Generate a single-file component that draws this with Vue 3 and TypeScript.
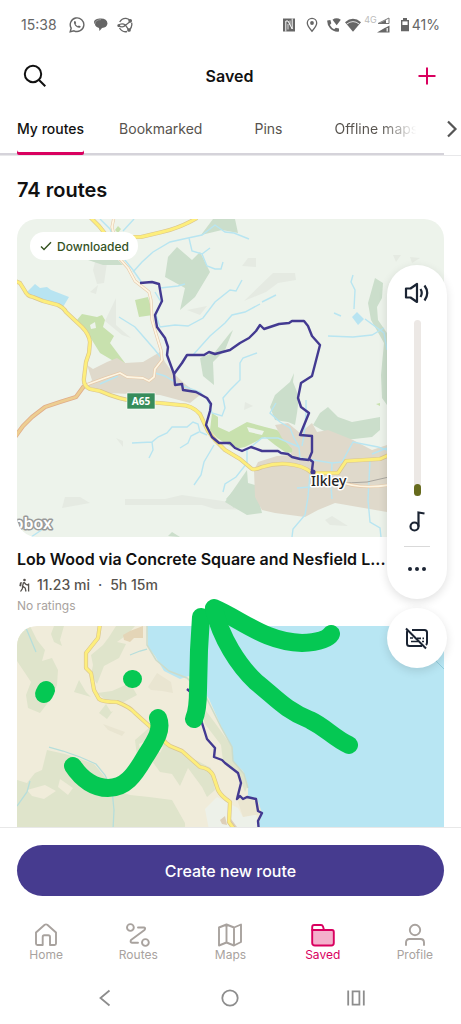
<script setup lang="ts">
import { ref } from 'vue'

type TabId = 'home' | 'routes' | 'maps' | 'saved' | 'profile'

const listTabs: string[] = ['My routes', 'Bookmarked', 'Pins', 'Offline maps']
const activeTab = ref<string>('My routes')
const volume = ref<number>(0)

const navItems: { id: TabId; label: string }[] = [
  { id: 'home', label: 'Home' },
  { id: 'routes', label: 'Routes' },
  { id: 'maps', label: 'Maps' },
  { id: 'saved', label: 'Saved' },
  { id: 'profile', label: 'Profile' },
]
const activeNav = ref<TabId>('saved')

// Main roads are drawn twice: a darker casing below, a bright line above.
const ilkleyRoads: string[] = [
  'M15 281L20 283L25 291Q27 296 33 297L43 301L58 305Q64 308 66 312L82 327Q89 334 90 342L89 353L86 362L84 378Q83 386 90 389L100 391Q120 400 140 402L160 403L180 405Q192 405 200 414Q205 425 208 431L215 440L225 450L240 459L252 469Q256 470 262 467Q275 463 287 464Q303 465 312 473L338 473L346 461L380 459L389 455',
  'M90 217L99 226L107 236M128 237L141 237L162 232Q180 228 197 218',
]
const coastRoads: string[] = [
  'M100 624L98 638L86 653L86 668L91 673L94 690L99 699Q103 702 117 702Q130 707 135 713L145 722L154 730L166 743L170 746L182 751L200 767Q209 768 213 775L218 790Q221 796 230 802L229 822L234 829',
]
const streams: string[] = [
  'M133 272L142 262L153 252L170 242L188 238L202 235L215 225L225 232L234 233L249 239',
  'M189 238L192 251L202 254L210 248M202 254L207 266L215 269L221 269L223 262',
  'M100 219L110 229L120 254L133 270L142 283M134 219L123 231',
  'M155 292L161 302L156 315L160 327L175 325L188 326L203 318L215 302L230 290L236 291L242 280',
  'M193 355L210 336L225 323L232 315L245 312L260 304M262 302L276 295',
  'M160 288L178 286L185 284M119 317L135 327L142 335L155 350L162 359',
  'M100 384L118 376M155 373L165 376L180 385L200 392L208 400L212 413L222 416L225 408L223 398L230 390L240 380L240 363L243 358L257 353',
  'M132 443L152 442L158 437L167 433L172 427L187 427L193 422L198 424L200 432L207 435M152 442L153 450L149 458M180 448L188 443L191 436L199 432',
  'M214 445L204 462L201 475L194 485M223 492L225 484L236 477L247 463L247 450L262 438L278 438L299 447',
  'M276 403L270 413L280 422L290 428L294 438L299 447L300 458L332 463L342 462L353 442L378 447L387 450',
  'M306 400V412L304 436L302 446M332 463L331 487L332 499M297 488L311 487',
  'M310 474L308 497L305 515L293 529L292 537M370 460L368 500L370 522L380 528L381 537M372 454L387 448',
  'M353 275L351 282L355 290L354 309M328 336L353 337L372 335L384 328M334 313L341 316M365 319L384 333L387 350M31 537L43 529',
]
const walkLoop: string[] = [
  'M140 283L152 282L159 284L162 301L155 315L157 327L165 338L168 347L167 355L174 374L182 363L187 355L204 355L209 352L215 354L230 350L240 343L249 338L256 331L260 325L264 329L279 324L289 323L292 321L304 321L308 326L312 336L320 345L312 376L301 383L298 398L301 407L309 413L300 435L312 436L312 452L309 459L313 462L312 470L313 473',
  'M174 374L175 385L182 384L183 390L196 392L207 398L211 404L210 411L206 425L212 437L219 443L230 443L235 448L242 451L251 447L262 451L278 451L281 453L288 454L292 457L300 459L309 460',
]
</script>

<template>
  <div class="app">
    <header class="status">
      <div class="status-side">
        <span class="clock">15:38</span>
        <svg class="s-icon first" viewBox="0 0 16 16" width="16" height="16" fill="none" stroke="#666" stroke-width="1.4">
          <path d="M1.2 14.8L2.2 11.2A6.8 6.8 0 1 1 5 13.8Z" />
          <path d="M5.2 4.2Q4 6.2 6.2 8.7Q8.6 11.3 10.8 10.7Q12 10 11.6 9.2L9.8 8.4L8.9 9.3Q7.2 8.7 6.5 7.1L7.2 6.2L6.5 4.3Q5.8 3.7 5.2 4.2Z" fill="#666" stroke="none" />
        </svg>
        <svg class="s-icon" viewBox="0 0 16 16" width="16" height="16">
          <path d="M2 3Q4 1 8 1.5Q14 1.5 14.5 6.5Q14 10.5 9 11L6.5 14L6 11Q2.2 10 2 7.3Q0 5 2 3Z" fill="#666" />
          <path d="M2 7Q2 2.8 8 2.6" fill="none" stroke="#aaa" stroke-width=".7" />
        </svg>
        <svg class="s-icon" viewBox="0 0 16 16" width="16" height="16" fill="none" stroke="#666" stroke-width="1.3">
          <path d="M2.7 5Q5 1 9 1.3Q11.5 1.7 12.5 3M14.6 5.7Q15.7 10 12 13.4M10 14.5Q5.5 15.7 2.5 11" />
          <path d="M1 8.5Q5 5.5 8.5 8.2L13.2 4.6M1 8.5Q6 11.5 8.5 8.2L12 13.3" /><circle cx="13.2" cy="3.8" r="1.2" fill="#666" /><circle cx="12" cy="13" r="1.2" fill="#666" /><circle cx="1.8" cy="8.6" r=".8" fill="#666" />
        </svg>
      </div>
      <div class="status-side right">
        <svg viewBox="0 0 14 14" width="14" height="14"><path d="M1 .5H13V13.5H1Z" fill="#666" /><path d="M3.8 13.5V3L6 3L10.2 11V.5" stroke="#fff" stroke-width="1" fill="none" /><path d="M6 11.5V6M8 2.5V7" stroke="#fff" stroke-width=".8" /></svg>
        <svg class="pin" viewBox="0 0 12 16" width="12" height="16"><path d="M6 14.2Q1.3 8.8 1.3 6A4.7 4.7 0 0 1 10.7 6Q10.7 8.8 6 14.2Z" fill="none" stroke="#666" stroke-width="1.3" /><circle cx="6" cy="6" r="1.9" fill="#666" /></svg>
        <svg viewBox="0 0 16 16" width="16" height="16"><path d="M1.2 3.5L4.4 3L5.3 6.3L3.9 8Q5.5 11 8.2 12.3L9.8 10.7L13 11.6V14.6Q8 15.5 4 11.3Q1 7.8 1.2 3.5ZM6.5 2.7Q10.5-.2 14.8 2.7L10.7 8.3Z" fill="#666" /></svg>
        <svg viewBox="0 0 18 16" width="18" height="16"><path d="M1 5.2Q9-1.7 17 5.2L9 14.7Z" fill="#666" /><path d="M2.8 7Q9 2.2 15.2 7" stroke="#fff" stroke-width=".8" fill="none" /></svg>
        <span class="fourg">4G</span>
        <svg viewBox="0 0 13 16" width="13" height="16"><path d="M12 1V6.5H1Z" fill="none" stroke="#777" /><path d="M9 3V6.5H2ZM8.5 10.5V15.5H0ZM12.5 8.5V15.5H0Z" fill="#666" /><path d="M10.2 11V14.5" stroke="#fff" stroke-width="1.2" /></svg>
        <svg class="battery" viewBox="0 0 10 14" width="10" height="14"><path d="M3 0H7V2H9V13.3H1V2H3Z" fill="#666" /><path d="M2.4 3.4H7.6V7H2.4Z" fill="#fff" /></svg>
        <span class="clock">41%</span>
      </div>
    </header>

    <div class="titlebar">
      <button class="icon-btn" aria-label="Search">
        <svg viewBox="0 0 24 24" width="24" height="24" fill="none" stroke="#111" stroke-width="2"><circle cx="10" cy="10" r="8.2" /><path d="M16 16L22.3 22.3" /></svg>
      </button>
      <h1>Saved</h1>
      <button class="icon-btn end" aria-label="Add">
        <svg viewBox="0 0 18 18" width="18" height="18" stroke="#d9005f" stroke-width="2"><path d="M9 .5V17.5M.5 9H17.5" /></svg>
      </button>
    </div>

    <nav class="tabs" aria-label="Saved lists">
      <div class="tab-row">
        <button v-for="t in listTabs" :key="t" class="tab" :class="{ active: t === activeTab }" @click="activeTab = t">{{ t }}</button>
      </div>
      <button class="more" aria-label="More tabs">
        <svg viewBox="0 0 12 18" width="12" height="18" fill="none" stroke="#555" stroke-width="2.2"><path d="M2 1.5L9.5 9L2 16.5" /></svg>
      </button>
    </nav>

    <main class="list">
      <h2>74 routes</h2>
      <article class="card">
        <div class="map">
          <svg class="map-art" viewBox="17 219 427 318" preserveAspectRatio="xMidYMid slice">
            <path d="M17 219H444V537H17Z" fill="#edf3eb" />
            <g fill="#e5eae2">
              <path d="M95 262L107 263L104 283L97 284L93 270ZM90 292L98 285L96 294ZM116 298V325L131 338L122 335L105 321ZM187 310L207 306L200 315ZM244 301L273 273L295 273L296 280L278 283L266 292ZM242 266L248 258H256V267ZM393 255H401L396 262ZM410 257L420 258L412 263ZM125 499L165 499L182 495L243 504L253 510L215 509L202 505L125 505ZM116 438L123 447L123 441ZM325 520L332 516L348 526L330 525Z" />
              <path d="M65 497H80L90 503L62 508ZM245 402L253 406L244 410Z" />
            </g>
            <g fill="#cbdecb">
              <path d="M168 257L177 247L192 260L200 252L210 272L195 297L180 310L185 288L165 277ZM213 219H235L238 233L222 230L201 235Z" />
              <path d="M200 358L215 352L230 333L233 330L225 350L213 362L214 385L203 376Z" />
              <path d="M88 260L117 259L123 265L103 265ZM270 407L275 395L290 382L294 373L293 382L299 397L297 413L295 425L288 422L275 420Z" />
              <path d="M313 425L320 413L328 407L338 417L352 422L380 417L380 430L372 437L345 440L322 430ZM225 502L247 470L248 483L255 485L262 513L247 515L235 508Z" />
              <path d="M368 303L375 278L383 283L382 298L377 307L378 320L387 333V405L382 398L381 375L384 343L371 320ZM168 536L172 532L180 537ZM226 499L234 490V508Z" />
            </g>
            <g fill="#c8e1ae">
              <path d="M77 320L82 314L97 317L102 315L105 320L103 327L114 336L110 343L125 363H117L100 353L90 337L78 325Z" />
              <path d="M135 300L148 297L153 315L139 317ZM115 230L118 226L121 229L118 233Z" />
              <path d="M212 413L218 417V427L229 432L247 422L265 427L277 430L292 442L293 453L285 452L275 445L265 437L245 447L235 449L225 443L217 438L210 430ZM353 445L363 446L360 451L354 449ZM376 404L380 403V406Z" />
            </g>
            <path d="M90 325L95 322L96 328L91 329ZM247 427L264 431L262 435L249 432Z" fill="#edf3eb" />
            <g fill="#dfd9cb">
              <path d="M87 365L93 369L107 362L117 358L125 363L143 362L160 352L165 362L172 372L185 384L200 395L190 403L160 395L130 394L108 393L88 386L92 380Z" />
              <path d="M254 470L258 462L277 456L290 455L293 450L282 438L275 425L288 423L300 433L312 423L317 432L328 430L353 440L372 450L387 445V512L358 507L335 503L318 510L305 517L275 513L262 510L255 497Z" />
            </g>
            <path d="M27 292L35 284L40 288L47 287L51 290L69 297L63 307L33 299ZM352 317L357 312L364 319L358 325Z" fill="#b8e4f1" />
            <g fill="none" stroke="#b8e5f1" stroke-width="1.4"><path v-for="s in streams" :key="s" :d="s" /></g>
            <path d="M335 483Q352 483 367 482L389 477" fill="none" stroke="#aaa7a0" stroke-width="1" />
            <g fill="none" stroke-linejoin="round">
              <path class="minor-case" d="M114 217L112 227L114 235L120 259L128 268L135 281L149 292L151 300L152 320L157 337L161 350L162 360L155 369L154 377L149 381L143 378L127 377L120 373L105 378L86 385M335 480Q358 490 389 485" />
              <path class="minor" d="M114 217L112 227L114 235L120 259L128 268L135 281L149 292L151 300L152 320L157 337L161 350L162 360L155 369L154 377L149 381L143 378L127 377L120 373L105 378L86 385M335 480Q358 490 389 485" />
              <path d="M84 386L76 397L60 402L45 407L32 417L23 426L15 437" stroke="#e0ad8a" stroke-width="4.4" />
              <path d="M84 386L76 397L60 402L45 407L32 417L23 426L15 437" stroke="#edce91" stroke-width="2.8" />
              <path v-for="r in ilkleyRoads" :key="'c' + r" class="road-case" :d="r" />
              <path v-for="r in ilkleyRoads" :key="r" class="road" :d="r" />
              <path v-for="w in walkLoop" :key="w" class="walk" :d="w" />
            </g>
            <circle cx="313" cy="472" r="2.6" fill="#433a91" />
            <path d="M127 393H155V409H127Z" fill="#378c5b" stroke="#fff" stroke-width=".6" />
            <text class="road-sign" x="141" y="405" text-anchor="middle">A65</text>
            <text class="place" x="311" y="486">Ilkley</text>
            <text class="credit" x="52" y="529" text-anchor="end">pbox</text>
          </svg>
          <span class="badge">
            <svg viewBox="0 0 12 10" width="12" height="10" fill="none" stroke="#34521f" stroke-width="1.4"><path d="M1 5.5L4 8.5L11 1.2" /></svg>
            Downloaded
          </span>
        </div>
        <h3>Lob Wood via Concrete Square and Nesfield L...</h3>
        <p class="meta">
          <svg viewBox="0 0 14 14" width="14" height="14" fill="none" stroke="#55514d" stroke-width="1.3">
            <circle cx="7.5" cy="2" r="1.3" fill="#55514d" stroke="none" />
            <path d="M6.6 4.2L5.6 8L8.2 10L9 13.5M5.8 8.5L5.2 11L3.5 13.5M7 4.3L9 6.5L11 7M11.6 5.5V13.5" />
            <path d="M4.8 4L3 4.5L2.3 8L4.2 8.4Z" fill="#55514d" stroke="none" />
          </svg>
          <span>11.23 mi</span><span class="dot">·</span><span>5h 15m</span>
        </p>
        <p class="rating">No ratings</p>
      </article>

      <article class="card">
        <div class="map">
          <svg class="map-art" viewBox="17 626 427 318" preserveAspectRatio="xMidYMid slice">
            <path d="M17 626H444V944H17Z" fill="#f0ecda" />
            <g fill="#dfe4cb">
              <path d="M17 626H30L37 640L45 650L42 661L52 658L58 670L57 685L50 700L40 713L28 708L26 695L31 682L25 673L17 661Z" />
              <path d="M54 626H64L60 640L62 646L54 642L51 634ZM116 626H135L128 634L117 642L126 644L119 658L104 666L97 684L91 675L93 665L91 655L103 645L109 637ZM97 693L112 691L130 683L137 695L122 703L107 701ZM79 680L86 692L91 697L74 692ZM106 704L111 712L113 711L107 719L99 713Z" />
              <path d="M17 780L27 783L35 773L42 770L47 750L65 754L80 759L94 764L104 776L115 790L130 795L149 797L172 800L185 823L187 944H17Z" />
              <path d="M135 740L150 727L163 742L175 749L190 757L211 768L215 790L207 797L202 787L188 768L180 786L172 774L160 772L149 757L137 756Z" />
              <path d="M198 700L218 727L233 748L233 760L242 770L248 785L245 792L238 773L223 761L221 745L205 724Z" />
            </g>
            <g fill="#f0ecda"><path d="M139 744L148 740L150 747L140 749ZM153 742L163 747L160 753ZM27 790L45 785L56 791L44 799L32 796ZM60 779L73 788L68 795L58 787Z" /></g>
            <g fill="#e9e5d1"><path d="M148 687L157 673L171 682L173 693L162 691L151 690ZM103 724L125 732L122 736L108 730Z" /></g>
            <path d="M123 635L130 631L143 626V638L134 638L130 642L124 640Z" fill="#e4d5b7" />
            <path d="M205 809L217 797L230 804L238 808L243 817L256 813L258 830H209Z" fill="#edf1e9" />
            <path d="M236 796L249 799L260 801L261 814L243 817Z" fill="#ebe6d1" />
            <path d="M220 820L225 816L227 825L222 824ZM231 819L237 827H230Z" fill="#ddcfb8" />
            <g fill="none" stroke="#b6dedb" stroke-width="1.3"><path d="M26 628L31 640L36 652M49 747L63 751L80 757L96 764L105 775L112 790L114 810L113 830M17 806L27 792L30 781M130 655L140 651L147 649" /></g>
            <path d="M147 626H444V944H258V827L262 813L257 798L248 797L248 785L243 771L233 761L233 749L224 733L209 699L198 683L189 676L180 679L164 671L155 656L148 647Z" fill="#b8e6f3" />
            <path d="M147 626V645L156 660L169 671L187 678L206 697L221 727L232 747L233 761L244 774L248 788" fill="none" stroke="#ccdccb" stroke-width="1.5" />
            <path d="M436 661L446 671" stroke="#91cddd" stroke-width="1" />
            <g fill="none" stroke-linejoin="round">
              <path v-for="r in coastRoads" :key="'c' + r" class="road-case" :d="r" />
              <path v-for="r in coastRoads" :key="r" class="road" :d="r" />
              <path class="walk" d="M187 689L193 694L200 709L202 723L207 739L215 748L214 757L222 760L225 763L238 773L241 783L237 799L240 796L243 799L247 797L256 799L258 811L262 813L258 821L259 832" />
            </g>
          </svg>
        </div>
      </article>
    </main>

    <footer class="footer">
      <button class="create">Create new route</button>
      <nav class="bottom-nav" aria-label="Main">
        <a v-for="n in navItems" :key="n.id" href="#" :class="{ active: n.id === activeNav }" @click.prevent="activeNav = n.id">
          <svg viewBox="0 0 24 24" width="24" height="24" fill="none" stroke="currentColor" stroke-width="1.9" stroke-linejoin="round" stroke-linecap="round">
            <template v-if="n.id === 'home'"><path d="M2 9.5L10.7 1.8Q12 1 13.3 1.8L22 9.5V20.5Q22 22 20.5 22H16V14Q16 12.3 14.3 12.3H10.2Q8.7 12.3 8.7 14V22H3.5Q2 22 2 20.5Z" /></template>
            <template v-else-if="n.id === 'routes'"><circle cx="4.4" cy="4.5" r="3.4" /><circle cx="19.4" cy="19.5" r="3.4" /><path d="M12 4.5H18Q20 5 18.5 7L5 17Q3.8 19.5 6 19.7H12" /></template>
            <template v-else-if="n.id === 'maps'"><path d="M1 4.5L8.5 1.5L16 4.5L23 1.5V19L16 22.5L8.5 19.5L1 22.5ZM8.5 1.5V19.5M16 4.5V22.5" /></template>
            <template v-else-if="n.id === 'saved'"><path d="M1.2 7H21Q22.8 7 22.8 9V20Q22.8 22.5 20.3 22.5H4Q1.2 22.5 1.2 20Z" fill="#f4b0cc" /><path d="M1.2 7V4Q1.2 2 3.2 2H10Q11.5 2 12 3.5L13 7" /></template>
            <template v-else><circle cx="12" cy="7" r="5.2" /><path d="M3 22V19.5Q3 16 6.5 16H17.5Q21 16 21 19.5V22" /></template>
          </svg>
          <span>{{ n.label }}</span>
        </a>
      </nav>
      <div class="system-nav">
        <button aria-label="Back"><svg viewBox="0 0 18 18" width="18" height="18" fill="none" stroke="#8d8d8d" stroke-width="1.8"><path d="M13.5 1.5L4.5 9L13.5 16.5" /></svg></button>
        <button aria-label="Home screen"><svg viewBox="0 0 18 18" width="18" height="18" fill="none" stroke="#8d8d8d" stroke-width="1.8"><circle cx="9" cy="9" r="7.7" /></svg></button>
        <button aria-label="Recent apps"><svg viewBox="0 0 18 18" width="18" height="18" fill="none" stroke="#8d8d8d" stroke-width="1.8"><path d="M1.2 1.5V16.5M16.8 1.5V16.5M5.6 2.4H12.4V15.6H5.6Z" /></svg></button>
      </div>
    </footer>

    <svg class="ink" viewBox="0 0 461 1024" aria-hidden="true">
      <g fill="none" stroke="#05c853" stroke-width="18" stroke-linecap="round" stroke-linejoin="round">
        <path d="M44 694L46 690M132 679H133" />
        <path d="M73 766C82 780 95 788 108 788C125 788 134 776 145 757C155 741 163 730 158 718" />
        <path d="M201 617L199 650L198 690Q198 710 194 719" />
        <path d="M214 608C242 620 265 642 302 643Q326 642 331 634" />
        <path d="M214 609C221 638 238 665 256 682C275 697 285 710 310 720C325 727 335 739 349 745" />
      </g>
    </svg>

    <aside class="volume-stack">
      <div class="volume">
        <button aria-label="Sound">
          <svg viewBox="0 0 26 22" width="26" height="22" fill="none" stroke="#1b2433" stroke-width="2.2" stroke-linejoin="round"><path d="M2 6.5H6.5L13 2V20L6.5 15.5H2Z" /><path d="M16.5 7Q19 11 16.5 15M20.5 3.5Q26 11 20.5 18.5" /></svg>
        </button>
        <input v-model.number="volume" type="range" min="0" max="100" aria-label="Media volume" />
        <button aria-label="Media">
          <svg viewBox="0 0 18 22" width="18" height="22" fill="none" stroke="#1b2433" stroke-width="2.2"><circle cx="6.5" cy="16.5" r="4" /><path d="M10.5 16.5V2.5L16.5 3.5" /></svg>
        </button>
        <hr />
        <button aria-label="More volume options">
          <svg viewBox="0 0 20 6" width="20" height="6" fill="#1b2433"><circle cx="3" cy="3" r="2" /><circle cx="10" cy="3" r="2" /><circle cx="17" cy="3" r="2" /></svg>
        </button>
      </div>
      <button class="caption" aria-label="Live captions off">
        <svg viewBox="0 0 24 24" width="24" height="24" fill="none" stroke="#1b2433" stroke-width="2"><path d="M7 4H19.5Q22 4 22 6.5V16.5Q22 18 21 19M17 20H4.5Q2 20 2 17.5V6Q2 5 2.8 4.3M1 2.5L21 22.5" /><path d="M5 12H8M12 12.3H16M17.5 12.3H19M6 15.5H13M17 15.5H19" stroke-width="1.7" /></svg>
      </button>
    </aside>
  </div>
</template>

<style>
body { margin: 0; background: #fff; }
</style>

<style scoped>
.app { position: relative; display: flex; flex-direction: column; height: 100vh; overflow: hidden; background: #fff; color: #111; font-family: Inter, "Liberation Sans", sans-serif; }
button { border: 0; padding: 0; background: none; font: inherit; color: inherit; cursor: pointer; }
svg { display: block; flex: none; }
h1, h2, h3, p { margin: 0; }
.status { display: flex; justify-content: space-between; align-items: center; height: 50px; padding: 0 21px; flex: none; color: #666; }
.status-side { display: flex; align-items: center; gap: 8px; }
.status-side.right { gap: 2px; }
.clock { font-size: 14px; line-height: 20px; }
.s-icon.first { margin-left: 4px; }
.pin { margin: 0 6px 0 8px; }
.fourg { align-self: flex-start; margin-right: -2px; font-size: 9px; line-height: 10px; color: #bbb; }
.battery { margin-left: 8px; }
.titlebar { display: grid; grid-template-columns: 1fr auto 1fr; align-items: center; height: 52px; padding: 0 25px 0 23px; flex: none; }
.icon-btn { justify-self: start; }
.icon-btn.end { justify-self: end; }
h1 { font-size: 16px; line-height: 24px; font-weight: 600; }
.tabs { display: flex; justify-content: space-between; height: 53px; flex: none; border-bottom: 1px solid #e8e8ea; }
.tab-row { display: flex; gap: 35px; flex: 1; min-width: 0; overflow: hidden; padding-left: 17px; box-shadow: inset 0 -2px #d5d3da; }
.tab { flex: none; min-width: 62px; font-size: 14px; color: #57534e; white-space: nowrap; }
.tab.active { color: #111; font-weight: 500; box-shadow: inset 0 -3px #d9005f; border-radius: 2px; }
.tab:last-child { background: linear-gradient(90deg, #57534e 56%, transparent 98%); background-clip: text; color: transparent; }
.more { display: flex; align-items: center; justify-content: flex-end; width: 17px; padding-right: 3px; flex: none; }
.list { flex: 1; min-height: 0; overflow: hidden; padding: 0 17px; }
h2 { font-size: 20px; line-height: 28px; font-weight: 600; padding: 20px 0 15px; }
.card { margin-bottom: 12px; }
.map { position: relative; aspect-ratio: 427 / 318; border-radius: 20px; overflow: hidden; }
.map-art { width: 100%; height: 100%; }
.road-case { stroke: #dac58e; stroke-width: 4.2; }
.road { stroke: #fdee7c; stroke-width: 2.9; }
.minor-case { stroke: #e6c9aa; stroke-width: 3; }
.minor { stroke: #fdf5e2; stroke-width: 1.8; }
.walk { stroke: #433a91; stroke-width: 2.4; }
.road-sign { font: 700 10px "Noto Sans", sans-serif; fill: #fff; }
.place { font: 500 14px "Noto Sans", sans-serif; fill: #222; stroke: #fff; stroke-width: 3px; paint-order: stroke; stroke-linejoin: round; }
.credit { font: 600 16px "Noto Sans", sans-serif; fill: #fff; stroke: #999a99; stroke-width: 3px; paint-order: stroke; stroke-linejoin: round; }
.badge { position: absolute; top: 13px; left: 13px; display: flex; align-items: center; gap: 5px; height: 28px; padding: 0 9px 0 10px; border-radius: 14px; background: #fff; color: #34521f; font-size: 12px; font-weight: 500; }
h3 { font-size: 16px; line-height: 24px; font-weight: 600; margin-top: 10px; white-space: nowrap; }
.meta { display: flex; align-items: center; gap: 6px; margin-top: 2px; font-size: 14px; font-weight: 500; line-height: 24px; color: #57534e; }
.dot { padding: 0 2px; }
.rating { font-size: 12px; line-height: 17px; color: #a8a29e; }
.footer { flex: none; background: #fff; border-top: 1px solid #e8e8e8; }
.create { display: block; width: calc(100% - 34px); height: 51px; margin: 17px 17px 0; border-radius: 26px; background: #463b8f; color: #fff; font-size: 16px; font-weight: 500; }
.bottom-nav { display: grid; grid-template-columns: repeat(5, 1fr); margin-top: 27px; }
.bottom-nav a { display: flex; flex-direction: column; align-items: center; text-decoration: none; color: #a8a29e; font-size: 12px; line-height: 16px; }
.bottom-nav a.active { color: #d9005f; }
.system-nav { display: flex; justify-content: space-around; padding: 26px 42px 17px; }
.ink { position: absolute; top: 0; left: 0; width: 100%; pointer-events: none; }
.volume-stack { position: absolute; top: 265px; right: 14px; display: flex; flex-direction: column; gap: 9px; width: 60px; }
.volume { display: flex; flex-direction: column; align-items: center; padding: 17px 0 27px; border-radius: 30px; background: #fff; box-shadow: 0 3px 10px rgba(0, 0, 0, .12); }
.volume input { appearance: none; writing-mode: vertical-lr; direction: rtl; width: 7px; height: 176px; margin: 16px 0 14px; border-radius: 4px; background: #ece8e5; }
.volume input::-webkit-slider-thumb { appearance: none; width: 7px; height: 12px; border-radius: 4px; background: #666a1d; }
.volume hr { width: 26px; height: 1px; margin: 14px 0 19px; border: 0; background: #d9d9d9; }
.caption { display: flex; align-items: center; justify-content: center; width: 60px; height: 60px; border-radius: 30px; background: #fff; box-shadow: 0 3px 10px rgba(0, 0, 0, .12); }
</style>
